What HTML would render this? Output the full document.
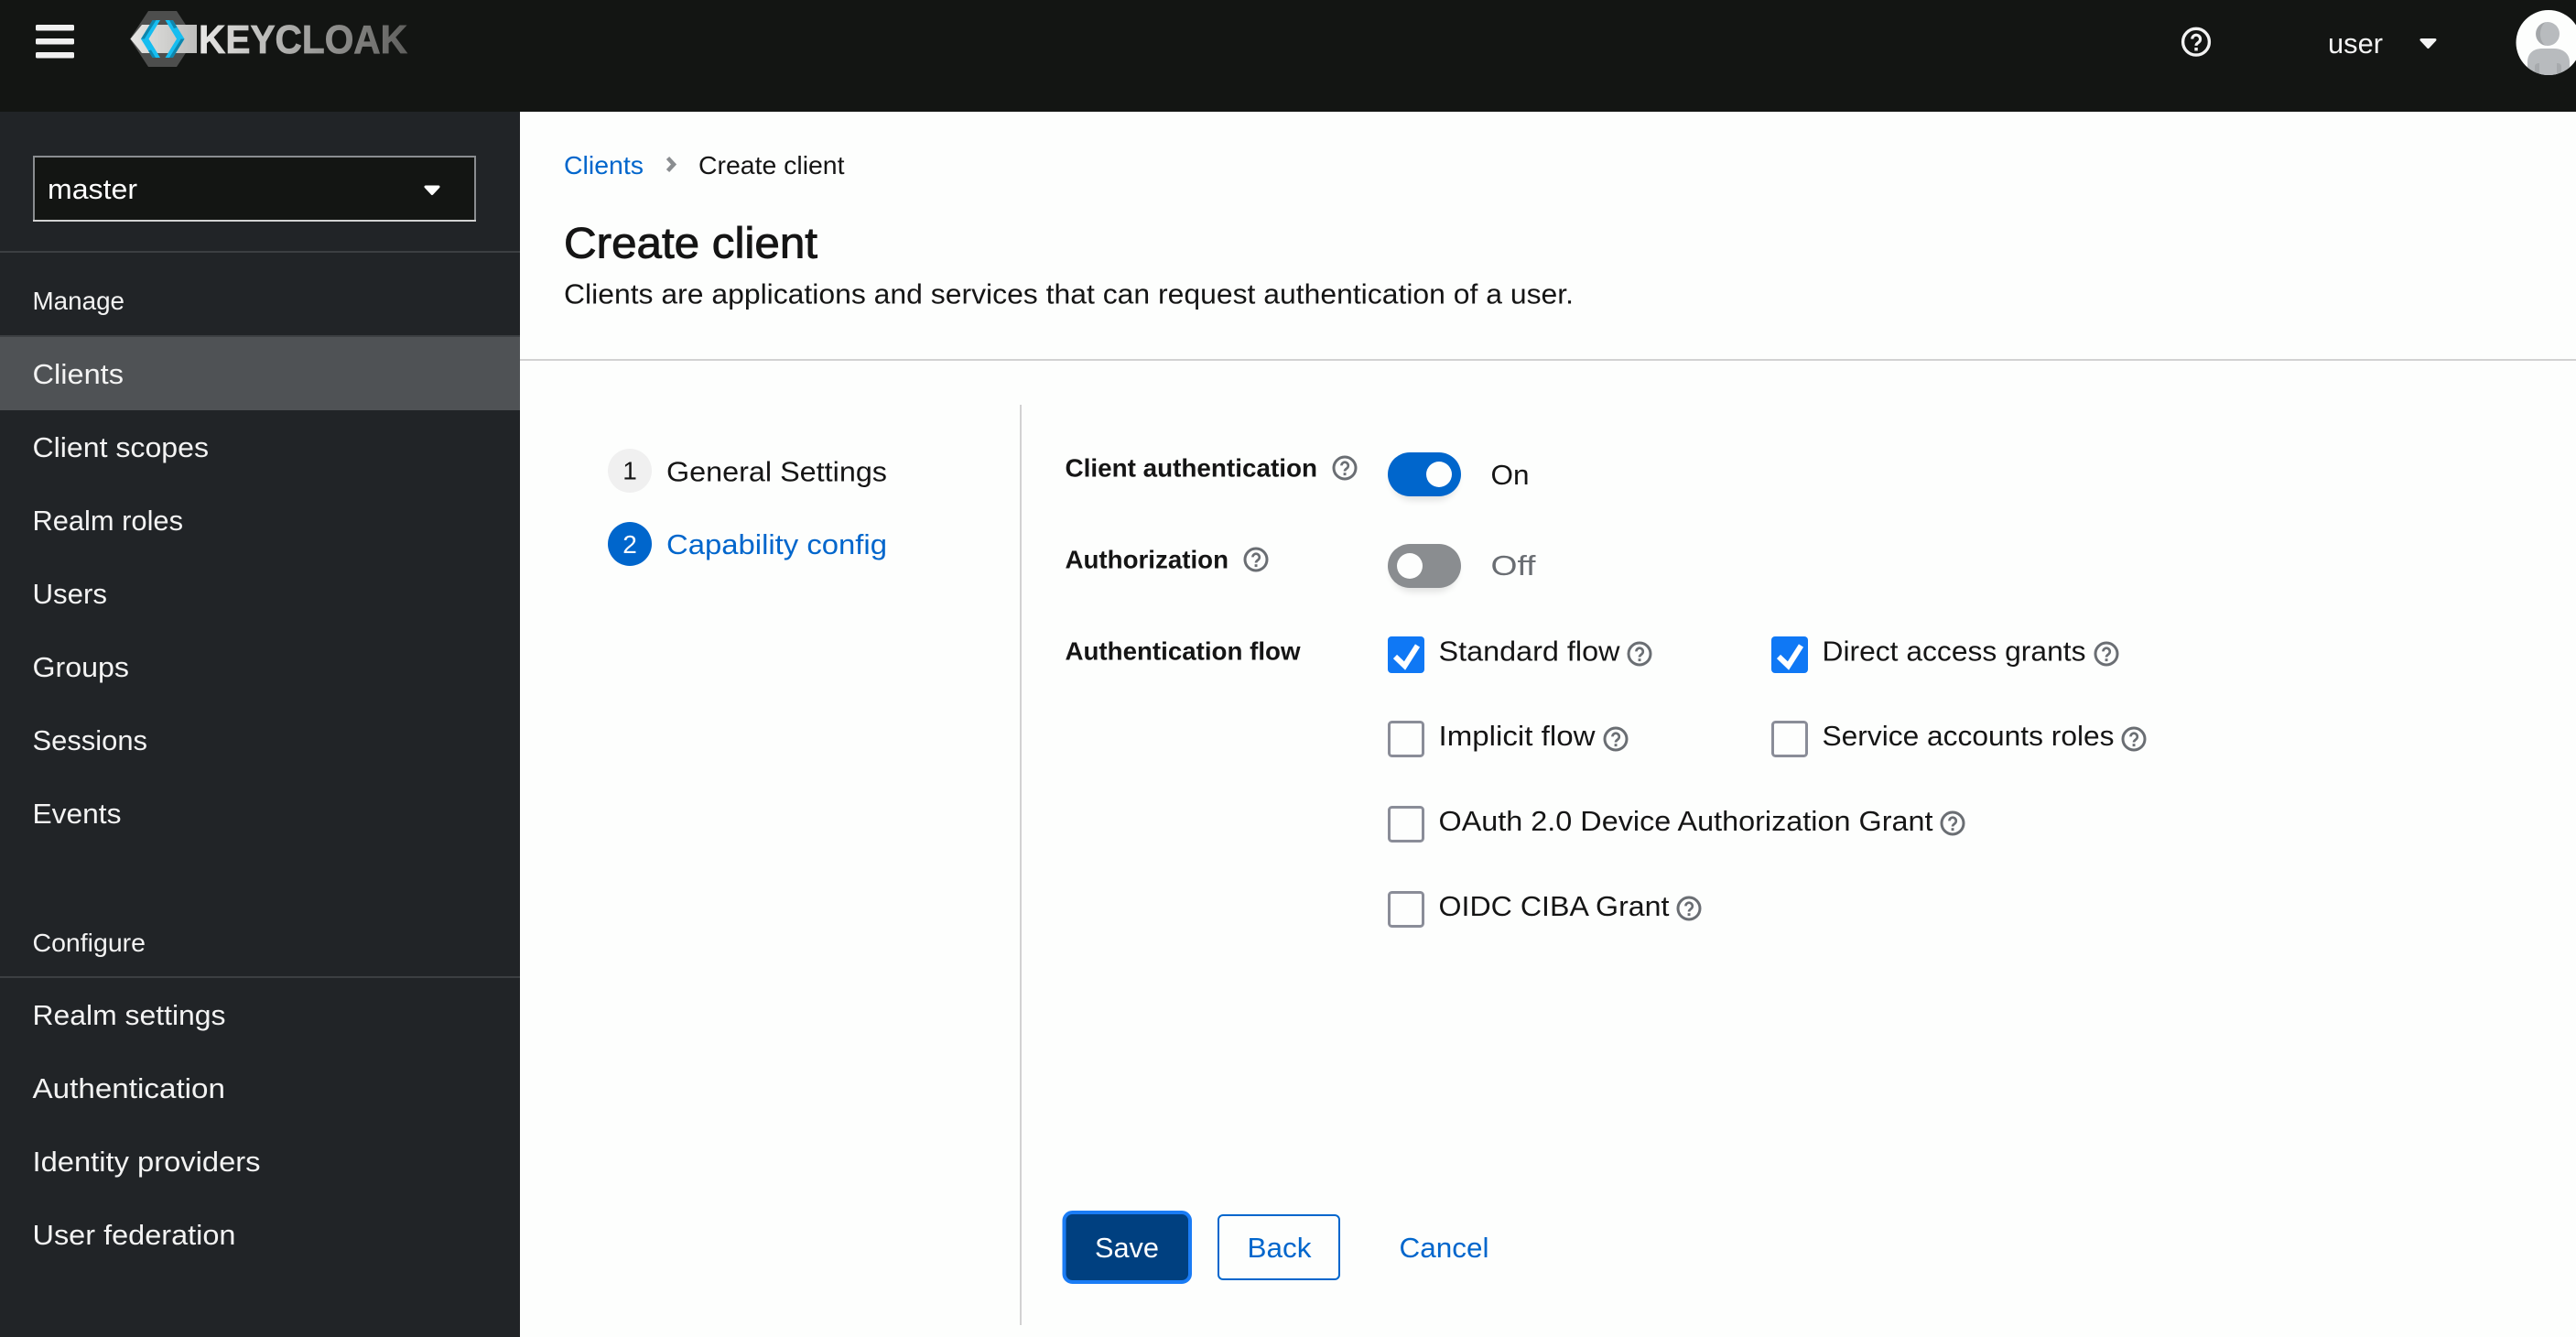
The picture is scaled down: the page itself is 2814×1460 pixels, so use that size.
<!DOCTYPE html>
<html lang="en">
<head>
<meta charset="utf-8">
<title>Keycloak - Create client</title>
<style>
html,body{margin:0;padding:0;width:2814px;height:1460px;overflow:hidden;background:#fdfefd}
svg{display:block}
text{font-family:"Liberation Sans",sans-serif;white-space:pre}
.s{font-size:31px;fill:#f3f3f3}
.g{font-size:28px;fill:#f3f3f3}
.m{font-size:31px;fill:#151515}
.b{font-size:28px;fill:#151515;font-weight:700}
.l{fill:#0066cc}
</style>
</head>
<body>
<svg xmlns="http://www.w3.org/2000/svg" width="2814" height="1460" viewBox="0 0 2814 1460">
<defs>
<linearGradient id="kg" gradientUnits="userSpaceOnUse" x1="217" y1="0" x2="445" y2="0"><stop offset="0" stop-color="#e8e8e6"/><stop offset=".45" stop-color="#aaaaa8"/><stop offset="1" stop-color="#5f5f5d"/></linearGradient>
<linearGradient id="bg" gradientUnits="userSpaceOnUse" x1="142" y1="0" x2="215" y2="0"><stop offset="0" stop-color="#e6e6e4"/><stop offset="1" stop-color="#bdbdbb"/></linearGradient>
<clipPath id="av"><circle cx="2784" cy="46.5" r="35.5"/></clipPath>
<filter id="bl" x="-30%" y="-60%" width="160%" height="220%"><feGaussianBlur stdDeviation="4"/></filter>
<g id="h"><circle r="12" fill="none" stroke="#6a6e73" stroke-width="3"/><path d="M-3.6-2.6a3.7 3.7 0 1 1 5.8 3.1c-1.5 1-2.2 1.6-2.2 3" fill="none" stroke="#6a6e73" stroke-width="2.6"/><rect x="-1.4" y="5.2" width="2.9" height="2.9" fill="#6a6e73"/></g>
</defs>

<rect width="2814" height="1460" fill="#fdfefd"/>
<rect width="2814" height="122" fill="#131513"/>
<rect y="122" width="568" height="1338" fill="#212427"/>

<!-- hamburger -->
<rect x="39" y="27" width="42" height="6.5" rx="1.5" fill="#f0f0f0"/>
<rect x="39" y="42" width="42" height="6.5" rx="1.5" fill="#f0f0f0"/>
<rect x="39" y="57" width="42" height="6.5" rx="1.5" fill="#f0f0f0"/>

<!-- logo -->
<polygon points="162,12 193,12 213,42.5 193,73 162,73 142,42.5" fill="#4d4e4d"/>
<polygon points="142.5,42.5 155,27 215,27 215,58 155,58" fill="url(#bg)"/>
<polygon points="154,42.5 166.7,22 175,22 162.5,42.5 175,63 166.7,63" fill="#16bdf0"/>
<polygon points="154,42.5 166.7,22 170.5,22 157.8,42.5" fill="#0e86ad"/>
<polygon points="166.7,63 170,63 165,54.5 162,55.5" fill="#0e86ad"/>
<polygon points="201.5,42.5 188.8,22 180.5,22 193,42.5 180.5,63 188.8,63" fill="#16bdf0"/>
<polygon points="201.5,42.5 188.8,63 185,63 197.7,42.5" fill="#0e86ad"/>
<polygon points="185,22 188.8,22 193.5,30 190,31" fill="#0e86ad"/>
<text x="217" y="58" font-size="44" font-weight="700" fill="url(#kg)" stroke="url(#kg)" stroke-width=".8" textLength="228" lengthAdjust="spacingAndGlyphs">KEYCLOAK</text>

<!-- header right -->
<g transform="translate(2399,45.7) scale(1.2)"><circle r="12" fill="none" stroke="#f2f2f2" stroke-width="2.8"/><path d="M-3.6-2.6a3.7 3.7 0 1 1 5.8 3.1c-1.5 1-2.2 1.6-2.2 3" fill="none" stroke="#f2f2f2" stroke-width="2.6"/><rect x="-1.4" y="5.2" width="2.9" height="2.9" fill="#f2f2f2"/></g>
<text x="2543" y="58" class="s" textLength="60" lengthAdjust="spacingAndGlyphs">user</text>
<polygon points="2645,43.5 2660,43.5 2652.5,51.5" fill="#f3f3f3" stroke="#f3f3f3" stroke-width="3" stroke-linejoin="round"/>
<circle cx="2784" cy="46.5" r="35.5" fill="#fdfefd"/>
<g clip-path="url(#av)">
<path d="M2761,82 L2761,68 C2761,57 2769,53 2777,53 L2790,53 C2799,53 2807,58 2807,68 L2807,82 Z" fill="#b8bbbe"/>
<path d="M2769,82 v-9 c0-3 2-4 5-4 v13z M2798,82 v-9 c0-3 -2-4 -5-4 v13z" fill="#a3a6a9" opacity=".8"/>
<circle cx="2783" cy="37" r="13" fill="#b8bbbe"/>
<path d="M2781,24.2 A13,13 0 0 0 2781,49.8 C2773,45 2773,29 2781,24.2Z" fill="#a3a6a9"/>
</g>

<!-- realm select -->
<rect x="37" y="171" width="482" height="70" fill="#131513" stroke="#8a8d90" stroke-width="2"/>
<rect x="36" y="240" width="484" height="2" fill="#d2d2d2"/>
<text x="52" y="217" class="s" textLength="98" lengthAdjust="spacingAndGlyphs" style="fill:#fff">master</text>
<polygon points="465,204 479,204 472,211.5" fill="#fff" stroke="#fff" stroke-width="3" stroke-linejoin="round"/>
<rect y="274" width="568" height="2" fill="#3c3f42"/>

<!-- sidebar -->
<text x="35.5" y="338" class="g" textLength="100.5" lengthAdjust="spacingAndGlyphs">Manage</text>
<rect y="366" width="568" height="2" fill="#3c3f42"/>
<rect y="368" width="568" height="80" fill="#4f5255"/>
<text x="35.5" y="419" class="s" textLength="99.5" lengthAdjust="spacingAndGlyphs">Clients</text>
<text x="35.5" y="499" class="s" textLength="192.5" lengthAdjust="spacingAndGlyphs">Client scopes</text>
<text x="35.5" y="579" class="s" textLength="164.5" lengthAdjust="spacingAndGlyphs">Realm roles</text>
<text x="35.5" y="659" class="s" textLength="81.5" lengthAdjust="spacingAndGlyphs">Users</text>
<text x="35.5" y="739" class="s" textLength="105.5" lengthAdjust="spacingAndGlyphs">Groups</text>
<text x="35.5" y="819" class="s" textLength="125.5" lengthAdjust="spacingAndGlyphs">Sessions</text>
<text x="35.5" y="899" class="s" textLength="97" lengthAdjust="spacingAndGlyphs">Events</text>
<text x="35.5" y="1039" class="g" textLength="123.5" lengthAdjust="spacingAndGlyphs">Configure</text>
<rect y="1066" width="568" height="2" fill="#3c3f42"/>
<text x="35.5" y="1119" class="s" textLength="211" lengthAdjust="spacingAndGlyphs">Realm settings</text>
<text x="35.5" y="1199" class="s" textLength="210.5" lengthAdjust="spacingAndGlyphs">Authentication</text>
<text x="35.5" y="1279" class="s" textLength="249" lengthAdjust="spacingAndGlyphs">Identity providers</text>
<text x="35.5" y="1359" class="s" textLength="222" lengthAdjust="spacingAndGlyphs">User federation</text>

<!-- breadcrumb -->
<text x="616" y="190" class="l" font-size="28" textLength="87" lengthAdjust="spacingAndGlyphs">Clients</text>
<polyline points="729.5,172.5 736,179.5 729.5,186.5" fill="none" stroke="#8a8d90" stroke-width="4.5"/>
<text x="763" y="190" font-size="28" fill="#151515" textLength="159.5" lengthAdjust="spacingAndGlyphs">Create client</text>

<!-- heading -->
<text x="616" y="281.5" font-size="47" fill="#151515" stroke="#151515" stroke-width=".9" textLength="277" lengthAdjust="spacingAndGlyphs">Create client</text>
<text x="616" y="331.5" class="m" textLength="1103" lengthAdjust="spacingAndGlyphs">Clients are applications and services that can request authentication of a user.</text>
<rect x="568" y="392" width="2246" height="2" fill="#d2d2d2"/>

<!-- wizard nav -->
<circle cx="688" cy="514" r="24" fill="#f0f0f0"/>
<text x="688" y="523.5" font-size="28" fill="#151515" text-anchor="middle">1</text>
<text x="728" y="525.5" class="m" textLength="241" lengthAdjust="spacingAndGlyphs">General Settings</text>
<circle cx="688" cy="594" r="24" fill="#0066cc"/>
<text x="688" y="604" font-size="28" fill="#fff" text-anchor="middle">2</text>
<text x="728" y="605" class="l" font-size="31" textLength="241" lengthAdjust="spacingAndGlyphs">Capability config</text>
<rect x="1114" y="442" width="2" height="1005" fill="#d2d2d2"/>

<!-- form labels -->
<text x="1163.5" y="520.5" class="b" textLength="275.5" lengthAdjust="spacingAndGlyphs">Client authentication</text>
<use href="#h" x="1469" y="511"/>
<text x="1163.5" y="620.5" class="b" textLength="178.5" lengthAdjust="spacingAndGlyphs">Authorization</text>
<use href="#h" x="1372" y="611"/>
<text x="1163.5" y="720.5" class="b" textLength="257" lengthAdjust="spacingAndGlyphs">Authentication flow</text>

<!-- toggles -->
<rect x="1520" y="500" width="72" height="46" rx="23" fill="#000" opacity=".12" filter="url(#bl)"/>
<rect x="1516" y="494" width="80" height="48" rx="24" fill="#0066cc"/>
<circle cx="1572" cy="518" r="14" fill="#fdfefd"/>
<text x="1628.5" y="529" class="m" textLength="42" lengthAdjust="spacingAndGlyphs">On</text>
<rect x="1520" y="600" width="72" height="46" rx="23" fill="#000" opacity=".12" filter="url(#bl)"/>
<rect x="1516" y="594" width="80" height="48" rx="24" fill="#8a8d90"/>
<circle cx="1540" cy="618" r="14" fill="#fdfefd"/>
<text x="1628.5" y="628" font-size="31" fill="#6a6e73" textLength="49" lengthAdjust="spacingAndGlyphs">Off</text>

<!-- checkboxes -->
<rect x="1516" y="695" width="40" height="40" rx="4" fill="#0f78f5"/>
<polyline points="1524,717 1534.5,727 1548.5,705" fill="none" stroke="#fff" stroke-width="6"/>
<text x="1571.5" y="721.5" class="m" textLength="198" lengthAdjust="spacingAndGlyphs">Standard flow</text>
<use href="#h" x="1791" y="714"/>

<rect x="1935" y="695" width="40" height="40" rx="4" fill="#0f78f5"/>
<polyline points="1943,717 1953.5,727 1967.5,705" fill="none" stroke="#fff" stroke-width="6"/>
<text x="1990.5" y="721.5" class="m" textLength="288" lengthAdjust="spacingAndGlyphs">Direct access grants</text>
<use href="#h" x="2301" y="714"/>

<rect x="1517.5" y="788.5" width="37" height="37" rx="3" fill="#fdfefd" stroke="#8a8d98" stroke-width="3"/>
<text x="1571.5" y="814" class="m" textLength="171" lengthAdjust="spacingAndGlyphs">Implicit flow</text>
<use href="#h" x="1765" y="807"/>

<rect x="1936.5" y="788.5" width="37" height="37" rx="3" fill="#fdfefd" stroke="#8a8d98" stroke-width="3"/>
<text x="1990.5" y="814" class="m" textLength="319" lengthAdjust="spacingAndGlyphs">Service accounts roles</text>
<use href="#h" x="2331" y="807"/>

<rect x="1517.5" y="881.5" width="37" height="37" rx="3" fill="#fdfefd" stroke="#8a8d98" stroke-width="3"/>
<text x="1571.5" y="907" class="m" textLength="540" lengthAdjust="spacingAndGlyphs">OAuth 2.0 Device Authorization Grant</text>
<use href="#h" x="2133" y="899"/>

<rect x="1517.5" y="974.5" width="37" height="37" rx="3" fill="#fdfefd" stroke="#8a8d98" stroke-width="3"/>
<text x="1571.5" y="1000" class="m" textLength="252" lengthAdjust="spacingAndGlyphs">OIDC CIBA Grant</text>
<use href="#h" x="1845" y="992"/>

<!-- buttons -->
<rect x="1162.5" y="1324" width="137.5" height="76" rx="9" fill="#004080" stroke="#1a7cf5" stroke-width="4"/>
<text x="1196" y="1373" font-size="31" fill="#fff" textLength="70" lengthAdjust="spacingAndGlyphs">Save</text>
<rect x="1331" y="1327" width="132" height="70" rx="5" fill="#fdfefd" stroke="#0066cc" stroke-width="2"/>
<text x="1362.5" y="1373" class="l" font-size="31" textLength="70" lengthAdjust="spacingAndGlyphs">Back</text>
<text x="1528.5" y="1373" class="l" font-size="31" textLength="98" lengthAdjust="spacingAndGlyphs">Cancel</text>
</svg>
</body>
</html>
